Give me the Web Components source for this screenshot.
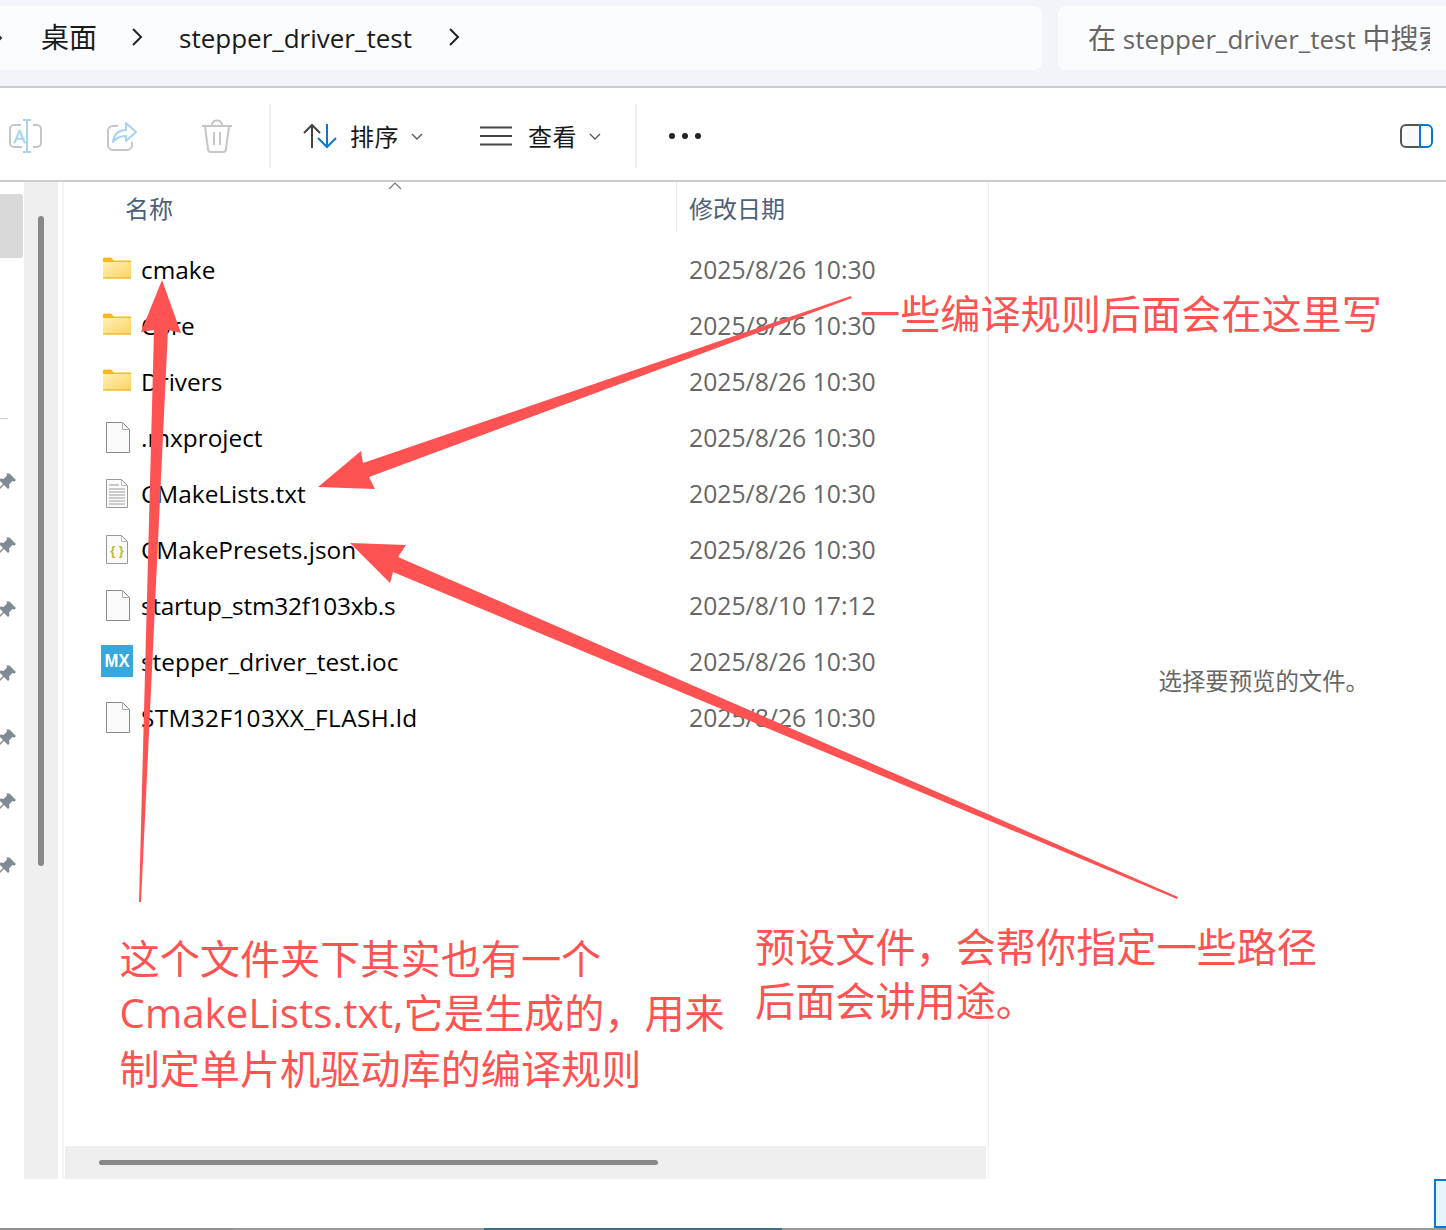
<!DOCTYPE html>
<html><head><meta charset="utf-8"><style>
html,body{margin:0;padding:0;background:#fff}
body{font-family:"Open Sans","Noto Sans CJK SC",sans-serif}
</style></head><body>
<fm-app>
  <fm-addressbar slot="top"></fm-addressbar>
  <fm-toolbar slot="top"></fm-toolbar>
  <fm-nav slot="nav"></fm-nav>
  <fm-list slot="list">
    <fm-row icon="folder" name="cmake" date="2025/8/26 10:30"></fm-row>
    <fm-row icon="folder" name="Core" date="2025/8/26 10:30"></fm-row>
    <fm-row icon="folder" name="Drivers" date="2025/8/26 10:30"></fm-row>
    <fm-row icon="file" name=".mxproject" date="2025/8/26 10:30"></fm-row>
    <fm-row icon="txt" name="CMakeLists.txt" date="2025/8/26 10:30"></fm-row>
    <fm-row icon="json" name="CMakePresets.json" date="2025/8/26 10:30"></fm-row>
    <fm-row icon="file" name="startup_stm32f103xb.s" date="2025/8/10 17:12" ls="-0.25"></fm-row>
    <fm-row icon="mx" name="stepper_driver_test.ioc" date="2025/8/26 10:30"></fm-row>
    <fm-row icon="file" name="STM32F103XX_FLASH.ld" date="2025/8/26 10:30" ls="0.35"></fm-row>
  </fm-list>
  <fm-preview slot="preview">选择要预览的文件。</fm-preview>
  <fm-status slot="bottom"></fm-status>
  <fm-annotations slot="over"></fm-annotations>
</fm-app>
<script>
const FONT='"Open Sans","Noto Sans CJK SC",sans-serif';
function def(name,html){
  customElements.define(name,class extends HTMLElement{
    connectedCallback(){
      if(this.shadowRoot)return;
      this.attachShadow({mode:'open'}).innerHTML=typeof html==='function'?html(this):html;
    }
  });
}
def('fm-app',`<style>
:host{display:block;position:relative;width:1446px;height:1230px;overflow:hidden;background:#fff}
.main{display:flex;height:997px}
</style>
<slot name="top"></slot>
<div class="main"><slot name="nav"></slot><slot name="list"></slot><slot name="preview"></slot></div>
<slot name="bottom"></slot><slot name="over"></slot>`);

def('fm-addressbar',`<style>
:host{display:flex;box-sizing:border-box;height:88px;background:#f1f4f8;border-bottom:2px solid #c9cdd3;padding:6px 0 16px;gap:16px;font-family:${FONT}}
.crumbs{width:1042px;box-sizing:border-box;background:#fbfcfe;border-radius:0 8px 8px 0;display:flex;align-items:center;color:#1a1a1a;overflow:hidden}
.search{flex:1;background:#fbfcfe;border-radius:8px 0 0 8px;display:flex;align-items:center;padding-left:30px;padding-right:16px;padding-bottom:2px;min-width:0;overflow:hidden;color:#666;font-size:26px;white-space:nowrap}
.search span.w{display:block;width:342px;overflow:hidden}
.c{font-size:28px}
.a{font-size:28px;margin-left:41px;margin-bottom:4px;width:56px;white-space:nowrap}
.b{font-size:26px;margin-left:36px;margin-bottom:1px;width:232px;white-space:nowrap}
svg{display:block;flex:none}
</style>
<div class="crumbs">
<svg width="4" height="14" viewBox="0 0 4 14" style="margin-left:-1px;margin-right:-3px"><path d="M-3 2l5 5-5 5" fill="none" stroke="#333" stroke-width="2"/></svg>
<span class="a">桌面</span>
<svg width="12" height="20" viewBox="0 0 12 20" style="margin-left:34px;margin-bottom:2px"><path d="M2 2l8 8-8 8" fill="none" stroke="#222" stroke-width="2"/></svg>
<span class="b">stepper_driver_test</span>
<svg width="12" height="20" viewBox="0 0 12 20" style="margin-left:37px;margin-bottom:2px"><path d="M2 2l8 8-8 8" fill="none" stroke="#222" stroke-width="2"/></svg>
</div>
<div class="search"><span class="w"><span class="c">在</span> stepper_driver_test <span class="c">中搜索</span></span></div>`);

def('fm-toolbar',`<style>
:host{display:flex;align-items:center;box-sizing:border-box;height:94px;padding-top:4px;background:#fff;border-bottom:2px solid #c9cdd3;font-family:${FONT};font-size:24px;color:#1a1a1a;position:relative}
svg{display:block;flex:none}
.div{width:2px;height:64px;background:#eeeeee;flex:none}
.t{white-space:nowrap;line-height:32px;padding-top:2px;letter-spacing:.5px}
</style>
<svg style="margin-left:9px" width="33" height="34" viewBox="0 0 33 34">
<path d="M12 6H5a4 4 0 0 0-4 4v14a4 4 0 0 0 4 4h8M24 6h4a4 4 0 0 1 4 4v14a4 4 0 0 1-4 4h-4" fill="none" stroke="#c6c6c6" stroke-width="2"/>
<path d="M14 1h8M14 33h8M18 1v32" fill="none" stroke="#a6d3f2" stroke-width="2"/>
<text x="4.500" y="23.500" font-family="Open Sans" font-size="19" stroke="#a6d3f2" stroke-width=".4" fill="#a6d3f2">A</text></svg>
<svg style="margin-left:65px" width="31" height="30" viewBox="0 0 31 30">
<path d="M11 5H6a5 5 0 0 0-5 5v14a5 5 0 0 0 5 5h14a5 5 0 0 0 5-5v-3" fill="none" stroke="#c6c6c6" stroke-width="2"/>
<path d="M19 2l10 9-10 9v-5c-6 0-10 2-13 6 1-7 5-12 13-12z" fill="none" stroke="#a6d3f2" stroke-width="2" stroke-linejoin="round"/></svg>
<svg style="margin-left:63px" width="32" height="34" viewBox="0 0 32 34">
<path d="M1 7h30M11 6c0-6 10-6 10 0M4 7l3 23a3 3 0 0 0 3 3h12a3 3 0 0 0 3-3l3-23M13 13v13M19 13v13" fill="none" stroke="#c6c6c6" stroke-width="2"/></svg>
<div class="div" style="margin-left:36px"></div>
<svg style="margin-left:32px" width="34" height="26" viewBox="0 0 34 26">
<path d="M9 25V2M1 10l8-8 8 8" fill="none" stroke="#444" stroke-width="2"/>
<path d="M24 1v23M15 15l9 9 9-9" fill="none" stroke="#0a78d0" stroke-width="2"/></svg>
<span class="t" style="margin-left:13px">排序</span>
<svg style="margin-left:12px" width="12" height="7" viewBox="0 0 12 7"><path d="M1 1l5 5 5-5" fill="none" stroke="#555" stroke-width="1.3"/></svg>
<svg style="margin-left:57px" width="32" height="20" viewBox="0 0 32 20"><path d="M0 1.500h32M0 10h32M0 18.500h32" stroke="#444" stroke-width="2"/></svg>
<span class="t" style="margin-left:16px">查看</span>
<svg style="margin-left:12px" width="12" height="7" viewBox="0 0 12 7"><path d="M1 1l5 5 5-5" fill="none" stroke="#555" stroke-width="1.3"/></svg>
<div class="div" style="margin-left:34px"></div>
<svg style="margin-left:31px" width="34" height="8" viewBox="0 0 34 8"><circle cx="4" cy="4" r="3" fill="#222"/><circle cx="17" cy="4" r="3" fill="#222"/><circle cx="30" cy="4" r="3" fill="#222"/></svg>
<svg style="margin-left:auto;margin-right:13px" width="33" height="24" viewBox="0 0 33 24"><path d="M21 1H6a5 5 0 0 0-5 5v12a5 5 0 0 0 5 5h15" fill="#fafafa" stroke="#555" stroke-width="2"/><path d="M20 1h7a5 5 0 0 1 5 5v12a5 5 0 0 1-5 5h-7z" fill="#fff" stroke="#0a78d0" stroke-width="2"/></svg>`);

const pin=`<svg class="pin" width="20" height="20" viewBox="0 0 20 20"><path d="M12.500.5l6.500 6.500-1.500 1.500-2-.5-3.500 3.500.5 3-1.500 1.500-4-4-5.500 5.500H.5V16.500l5.500-5.500-4-4 1.500-1.500 3 .5 3.500-3.500-.5-2z" fill="#7f8b94"/></svg>`;
def('fm-nav',`<style>
:host{display:flex;flex:0 0 64px;height:997px;box-sizing:border-box;border-right:2px solid #f4f4f4;position:relative}
.side{flex:0 0 24px;display:flex;flex-direction:column;align-items:flex-start;padding-top:12px;box-sizing:border-box;overflow:hidden}
.sel{width:23px;height:64px;background:#d9d9d9;border-radius:0 3px 3px 0;flex:none}
.sep{width:8px;height:1px;background:#ccc;margin-top:160px;flex:none}
.pin{display:block;flex:none;margin-left:-3px}
.pins{display:flex;flex-direction:column;gap:44px;margin-top:54px}
.bar{flex:0 0 34px;background:#efefef;padding:34px 0 0 14px;box-sizing:border-box;height:997px}
.thumb{width:6px;height:650px;background:#888;border-radius:3px}
</style>
<div class="side"><div class="sel"></div><div class="sep"></div><div class="pins">${pin.repeat(7)}</div></div>
<div class="bar"><div class="thumb"></div></div>`);

def('fm-list',`<style>
:host{display:flex;flex-direction:column;flex:0 0 925px;height:997px;box-sizing:border-box;border-right:1px solid #f0f0f0;font-family:${FONT};position:relative}
.head{display:flex;height:50px;flex:none;font-size:24px;color:#4c607a;line-height:53px;margin-bottom:10px}
.n{width:613px;padding-left:61px;box-sizing:border-box;border-right:1px solid #e5e5e5;position:relative}
.d{padding-left:12px}
.caret{position:absolute;left:324px;top:0}
.rows{flex:1;min-height:0}
.hs{height:33px;flex:none;background:#efefef;margin-left:1px;padding:14px 0 0 34px;box-sizing:border-box;width:921px}
.ht{width:559px;height:5px;background:#888;border-radius:3px}
</style>
<div class="head"><div class="n">名称<svg class="caret" width="14" height="8" viewBox="0 0 14 8"><path d="M1 7l6-6 6 6" fill="none" stroke="#777" stroke-width="1.2"/></svg></div><div class="d">修改日期</div></div>
<div class="rows"><slot></slot></div>
<div class="hs"><div class="ht"></div></div>`);

const icons={
folder:`<svg width="28" height="22" viewBox="0 0 28 22" style="margin-left:39px;margin-bottom:2px"><path d="M0 1.500a1 1 0 0 1 1-1h7l3 3h17v3H0z" fill="#f9b81c"/><path d="M0 5h28v16.500H0z" fill="url(#g)"/><path d="M0 21h28" stroke="#eba91a" stroke-width="1"/><defs><linearGradient id="g" x1="0" y1="0" x2="1" y2="1"><stop offset="0" stop-color="#fff0b4"/><stop offset="1" stop-color="#fdd263"/></linearGradient></defs></svg>`,
file:`<svg width="24" height="31" viewBox="0 0 24 31" style="margin-left:42px"><path d="M.5.5h16l7 7v23H.5z" fill="#fbfbfb" stroke="#8a8a8a"/><path d="M16.500.5v7h7" fill="none" stroke="#aaa"/></svg>`,
txt:`<svg width="22" height="29" viewBox="0 0 22 29" style="margin-left:42px"><path d="M.5.5h15l6 6v22H.5z" fill="#fbfbfb" stroke="#999"/><path d="M15.500.5v6h6" fill="none" stroke="#bbb"/><path d="M3 6h10M3 10h16M3 13h16M3 16h16M3 19h16M3 22h16M3 25h16" stroke="#9a9a9a"/></svg>`,
json:`<svg width="22" height="29" viewBox="0 0 22 29" style="margin-left:42px"><path d="M.5.5h15l6 6v22H.5z" fill="#fbfbfb" stroke="#999"/><path d="M15.500.5v6h6" fill="none" stroke="#bbb"/><text x="11" y="20" text-anchor="middle" font-family="Liberation Sans" font-weight="700" font-size="13" fill="#b5ba3a">{ }</text></svg>`,
mx:`<svg width="32" height="32" viewBox="0 0 32 32" style="margin-left:37px"><rect width="32" height="32" fill="#36a8dc"/><text x="16" y="22" text-anchor="middle" font-family="Liberation Sans" font-weight="700" font-size="18" fill="#fff" textLength="25" lengthAdjust="spacingAndGlyphs">MX</text></svg>`
};
def('fm-row',el=>`<style>
:host{display:flex;align-items:center;box-sizing:border-box;height:56px;padding-bottom:2px;font-family:${FONT};font-size:24.4px;white-space:nowrap;position:relative}
.i{width:77px;flex:none;display:flex;align-items:center}
.name{width:548px;flex:none;color:#000;letter-spacing:${el.getAttribute('ls')||0}px}
.date{color:#666;font-size:24.75px}
svg{display:block}
</style><div class="i">${icons[el.getAttribute('icon')]}</div><div class="name">${el.getAttribute('name')}</div><div class="date">${el.getAttribute('date')}</div>`);

def('fm-preview',`<style>
:host{display:flex;flex:1;align-items:center;box-sizing:border-box;height:997px;padding:0 0 0 169.500px;font-family:${FONT};font-size:23.4px;color:#666;white-space:nowrap}
</style><div style="margin-bottom:1px"><slot></slot></div>`);

def('fm-status',`<style>
:host{display:flex;flex-direction:column;height:51px;background:#fff;position:relative}
.sp{flex:1;display:flex;justify-content:flex-end}
.box{width:12px;height:49px;box-sizing:border-box;border:2px solid #0a78d0;border-right:0;background:#e5f3fb}
.line{height:2px;display:flex;flex:none;background:#999}
.a{width:234px;background:#8f9092}.b{width:250px;background:#999}.c{width:298px;background:#41727f}
</style><div class="sp"><div class="box"></div></div><div class="line"><div class="a"></div><div class="b"></div><div class="c"></div></div>`);

def('fm-annotations',`<style>
:host{display:block;position:absolute;inset:0;pointer-events:none;font-family:"Noto Sans CJK SC",sans-serif;color:#ff5353;font-size:40.15px}
svg{position:absolute;left:0;top:0}
.t{position:absolute;white-space:nowrap;line-height:54px}
.l{font-family:"Open Sans",sans-serif;letter-spacing:.1px}
</style>
<svg width="1446" height="1230" viewBox="0 0 1446 1230">
<polygon fill="#ff5353" points="162,280 181,333 168,330 141,902 139,902 154,330 141,332"/>
<polygon fill="#ff5353" points="318,487 361,451 363,463 851,296 852,298 369,477 375,489"/>
<polygon fill="#ff5353" points="350,543 406,545 398,557 1178,897 1177,899 393,572 390,583"/>
</svg>
<div class="t" style="left:860px;top:285px">一些编译规则后面会在这里写</div>
<div class="t" style="left:119.500px;top:930px">这个文件夹下其实也有一个<br><span class="l">CmakeLists.txt,</span>它是生成的，用来<br>制定单片机驱动库的编译规则</div>
<div class="t" style="left:755px;top:918px">预设文件，会帮你指定一些路径<br>后面会讲用途。</div>`);
</script>
</body></html>
